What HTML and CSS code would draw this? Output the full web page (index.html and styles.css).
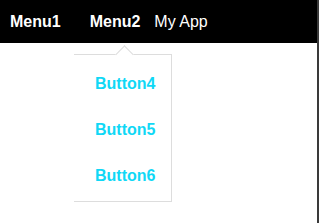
FILE: index.html
```html
<!DOCTYPE html>
<html lang="en">
<head>
    <meta charset="UTF-8">
    <meta name="viewport" content="width=device-width, initial-scale=1.0">
    <title>My App</title>
    <link rel="stylesheet" href="styles.css">
</head>
<body>
    <div class="app">
        <div class="navbar">
            <a class="menu-item menu1" href="#">Menu1</a>
            <a class="menu-item menu2" href="#">Menu2</a>
            <span class="app-title">My App</span>
        </div>

        <!-- Menu2 dropdown -->
        <div class="dropdown">
            <button class="dropdown-item">Button4</button>
            <button class="dropdown-item">Button5</button>
            <button class="dropdown-item">Button6</button>
        </div>
    </div>
</body>
</html>
```

FILE: styles.css
```css
html, body {
    margin: 0;
    padding: 0;
    background-color: #ffffff;
}

body {
    font-family: 'Liberation Sans', Arial, sans-serif;
    font-size: 16px;
}

.app {
    position: relative;
    width: 317px;
    height: 223px;
    border-right: 2px solid #3a3a3a;
    overflow: hidden;
}

.navbar {
    display: flex;
    align-items: center;
    height: 43px;
    padding-left: 10px;
    background-color: #000000;
    color: #ffffff;
}

.menu-item {
    color: #ffffff;
    font-weight: bold;
    text-decoration: none;
}

.menu2 {
    margin-left: 29px;
}

.app-title {
    margin-left: 14px;
}

.dropdown {
    position: absolute;
    left: 74px;
    top: 54px;
    width: 97px;
    padding: 6px 0 2px;
    background-color: #ffffff;
    border-top: 1px solid #dddddd;
    border-right: 1px solid #dddddd;
    border-bottom: 1px solid #dddddd;
    display: flex;
    flex-direction: column;
}

.dropdown::before {
    content: '';
    position: absolute;
    left: 44px;
    top: -7px;
    width: 12px;
    height: 12px;
    background-color: #ffffff;
    border-top: 1px solid #dddddd;
    border-left: 1px solid #dddddd;
    transform: rotate(45deg);
}

.dropdown-item {
    height: 46px;
    padding: 0 0 0 21px;
    border: none;
    background: none;
    text-align: left;
    font-family: inherit;
    font-size: 16px;
    font-weight: bold;
    color: #10d8f6;
    cursor: pointer;
}
```
